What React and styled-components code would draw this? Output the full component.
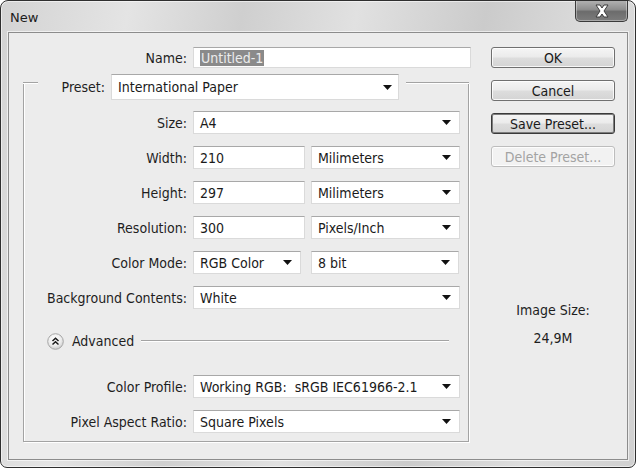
import React from 'react';
import styled, { createGlobalStyle } from 'styled-components';

const FONT = `"DejaVu Sans Condensed", "DejaVu Sans", sans-serif`;

const Global = createGlobalStyle`
  html, body { margin: 0; padding: 0; background: #ffffff; }
  body { width: 636px; height: 468px; overflow: hidden; }
  *, *::before, *::after { box-sizing: border-box; }
`;

const Window = styled.div`
  width: 636px;
  height: 468px;
  border: 1px solid #2f2f2f;
  border-radius: 8px 8px 7px 7px;
  background: linear-gradient(100deg, #d3d3d3 0%, #e4e4e4 18%, #cfcfcf 34%, #e1e1e1 50%, #cbcbcb 68%, #dddddd 84%, #d0d0d0 100%);
  box-shadow: inset 0 0 0 1px rgba(255, 255, 255, 0.55);
  display: flex;
  flex-direction: column;
  padding: 0 7px 7px 7px;
  font-family: ${FONT};
  overflow: hidden;
`;

const TitleBar = styled.div`
  height: 31px;
  display: flex;
  justify-content: space-between;
  align-items: flex-start;
`;

const Title = styled.div`
  font-family: "DejaVu Sans", sans-serif;
  font-size: 13px;
  line-height: 16px;
  color: #1c1c1c;
  padding: 9px 0 0 2px;
`;

const CloseButton = styled.div`
  width: 53px;
  height: 22px;
  margin-top: -1px;
  border: 1px solid #3a3a3a;
  border-top: none;
  border-radius: 0 0 5px 5px;
  background: linear-gradient(#b4b4b4 0%, #8e8e8e 45%, #6c6c6c 55%, #7c7c7c 100%);
  box-shadow: inset 0 0 0 1px rgba(255, 255, 255, 0.35);
  display: flex;
  align-items: center;
  justify-content: center;
`;

const Panel = styled.div`
  flex: 1;
  display: flex;
  background: #ececec;
  border: 1px solid #8c8c8c;
  box-shadow: 0 0 0 1px rgba(255, 255, 255, 0.6);
  padding: 14px 12px 0 14px;
`;

const LeftCol = styled.div`
  width: 448px;
  display: flex;
  flex-direction: column;
`;

const RightCol = styled.div`
  width: 124px;
  margin-left: 20px;
  display: flex;
  flex-direction: column;
  gap: 12px;
`;

const Row = styled.div`
  display: flex;
  align-items: center;
  height: ${(p) => p.h || 23}px;
  gap: 6px;
`;

const Label = styled.div`
  width: ${(p) => p.w}px;
  text-align: right;
  font-size: 14px;
  color: #1e1e1e;
  white-space: nowrap;
`;

const Field = styled.div`
  width: ${(p) => p.w}px;
  height: ${(p) => p.h || 23}px;
  margin-left: ${(p) => p.ml || 0}px;
  background: #ffffff;
  border: 1px solid #dadada;
  border-top-color: #a8a8a8;
  display: flex;
  align-items: center;
  justify-content: space-between;
  padding: 0 ${(p) => p.pr || 8}px 0 6px;
  font-size: 14px;
  color: #1a1a1a;
  white-space: nowrap;
`;

const Selected = styled.span`
  background: #8a8a8a;
  color: #ececec;
  line-height: 16px;
  padding: 0 1px;
`;

const Group = styled.div`
  width: 446px;
  margin-top: 15px;
  border: 1px solid #a3a3a3;
  border-top: none;
  box-shadow: inset 1px 0 0 #ffffff, 1px 1px 0 #ffffff;
  display: flex;
  flex-direction: column;
  padding-bottom: 8px;
`;

const GroupHeader = styled.div`
  display: flex;
  align-items: flex-start;
  margin: -9px -1px 0 -1px;
  height: 26px;
`;

const Rule = styled.div`
  height: 2px;
  margin-top: 8px;
  border-top: 1px solid #a3a3a3;
  border-bottom: 1px solid #ffffff;
  width: ${(p) => (p.w ? `${p.w}px` : 'auto')};
  flex: ${(p) => (p.w ? '0 0 auto' : '1')};
  margin-left: ${(p) => p.ml || 0}px;
`;

const HeaderLabel = styled(Label)`
  line-height: 26px;
  margin-right: 6px;
`;

const GroupRows = styled.div`
  display: flex;
  flex-direction: column;
  gap: 12px;
  margin-top: ${(p) => p.mt || 0}px;
`;

const AdvancedRow = styled.div`
  display: flex;
  align-items: center;
  height: 20px;
  margin: 22px 0 24px 0;
  padding-left: 23px;
`;

const AdvancedText = styled.span`
  font-size: 14px;
  color: #1e1e1e;
  margin-left: 8px;
`;

const AdvancedLine = styled.div`
  flex: 1;
  height: 2px;
  margin: 0 19px 0 7px;
  border-top: 1px solid #a3a3a3;
  border-bottom: 1px solid #ffffff;
`;

const Button = styled.div`
  height: 21px;
  border-radius: 3px;
  border: 1px solid ${(p) => (p.disabled ? '#bdbdbd' : p.primary ? '#3a3a3a' : '#707070')};
  background: ${(p) =>
    p.disabled ? '#f2f2f2' : 'linear-gradient(#f5f5f5 0%, #ebebeb 48%, #dddddd 52%, #d4d4d4 100%)'};
  box-shadow: ${(p) => (p.primary ? 'inset 0 0 0 1px #7d7d7d' : 'inset 0 0 0 1px rgba(255,255,255,0.8)')};
  color: ${(p) => (p.disabled ? '#a3a3a3' : '#1a1a1a')};
  font-size: 14px;
  display: flex;
  align-items: center;
  justify-content: center;
  white-space: nowrap;
`;

const ImageSize = styled.div`
  margin-top: 123px;
  display: flex;
  flex-direction: column;
  align-items: center;
  gap: 12px;
  font-size: 14px;
  line-height: 16px;
  color: #1e1e1e;
`;

const Arrow = () => (
  <svg width="9" height="5" viewBox="0 0 9 5">
    <path d="M0 0 H9 L4.5 5 Z" fill="#111" />
  </svg>
);

const CloseIcon = () => (
  <svg width="16" height="14" viewBox="0 0 16 14">
    <path
      d="M2 1 H6 L8 4 L10 1 H14 L10 7 L14 13 H10 L8 10 L6 13 H2 L6 7 Z"
      fill="#ffffff"
      stroke="#3c3c3c"
      strokeWidth="1"
      strokeLinejoin="round"
    />
  </svg>
);

const ToggleIcon = () => (
  <svg width="17" height="17" viewBox="0 0 17 17">
    <defs>
      <radialGradient id="tg" cx="0.45" cy="0.35" r="0.7">
        <stop offset="0" stopColor="#ffffff" />
        <stop offset="0.6" stopColor="#ececec" />
        <stop offset="1" stopColor="#c4c4c4" />
      </radialGradient>
    </defs>
    <circle cx="8.5" cy="8.5" r="7.8" fill="url(#tg)" stroke="#a6a6a6" strokeWidth="1" />
    <path d="M5.5 8 L8.5 5.2 L11.5 8" fill="none" stroke="#1a1a1a" strokeWidth="1.5" />
    <path d="M5.5 11.5 L8.5 8.7 L11.5 11.5" fill="none" stroke="#1a1a1a" strokeWidth="1.5" />
  </svg>
);

const FormRow = ({ label, children }) => (
  <Row>
    <Label w={163}>{label}</Label>
    {children}
  </Row>
);

export default function App() {
  return (
    <>
      <Global />
      <Window>
        <TitleBar>
          <Title>New</Title>
          <CloseButton>
            <CloseIcon />
          </CloseButton>
        </TitleBar>
        <Panel>
          <LeftCol>
            <Row h={21}>
              <Label w={164}>Name:</Label>
              <Field w={278} h={21}>
                <Selected>Untitled-1</Selected>
              </Field>
            </Row>
            <Group>
              <GroupHeader>
                <Rule w={15} />
                <HeaderLabel w={67}>Preset:</HeaderLabel>
                <Field w={288} h={26} pr={6}>
                  International Paper
                  <Arrow />
                </Field>
                <Rule ml={7} />
              </GroupHeader>
              <GroupRows mt={11}>
                <FormRow label="Size:">
                  <Field w={267}>
                    A4
                    <Arrow />
                  </Field>
                </FormRow>
                <FormRow label="Width:">
                  <Field w={112}>210</Field>
                  <Field w={149}>
                    Milimeters
                    <Arrow />
                  </Field>
                </FormRow>
                <FormRow label="Height:">
                  <Field w={112}>297</Field>
                  <Field w={149}>
                    Milimeters
                    <Arrow />
                  </Field>
                </FormRow>
                <FormRow label="Resolution:">
                  <Field w={112}>300</Field>
                  <Field w={149}>
                    Pixels/Inch
                    <Arrow />
                  </Field>
                </FormRow>
                <FormRow label="Color Mode:">
                  <Field w={108}>
                    RGB Color
                    <Arrow />
                  </Field>
                  <Field w={148} ml={4}>
                    8 bit
                    <Arrow />
                  </Field>
                </FormRow>
                <FormRow label="Background Contents:">
                  <Field w={267}>
                    White
                    <Arrow />
                  </Field>
                </FormRow>
              </GroupRows>
              <AdvancedRow>
                <ToggleIcon />
                <AdvancedText>Advanced</AdvancedText>
                <AdvancedLine />
              </AdvancedRow>
              <GroupRows>
                <FormRow label="Color Profile:">
                  <Field w={267}>
                    Working RGB:&nbsp; sRGB IEC61966-2.1
                    <Arrow />
                  </Field>
                </FormRow>
                <FormRow label="Pixel Aspect Ratio:">
                  <Field w={267}>
                    Square Pixels
                    <Arrow />
                  </Field>
                </FormRow>
              </GroupRows>
            </Group>
          </LeftCol>
          <RightCol>
            <Button>OK</Button>
            <Button>Cancel</Button>
            <Button primary>Save Preset...</Button>
            <Button disabled>Delete Preset...</Button>
            <ImageSize>
              <span>Image Size:</span>
              <span>24,9M</span>
            </ImageSize>
          </RightCol>
        </Panel>
      </Window>
    </>
  );
}
